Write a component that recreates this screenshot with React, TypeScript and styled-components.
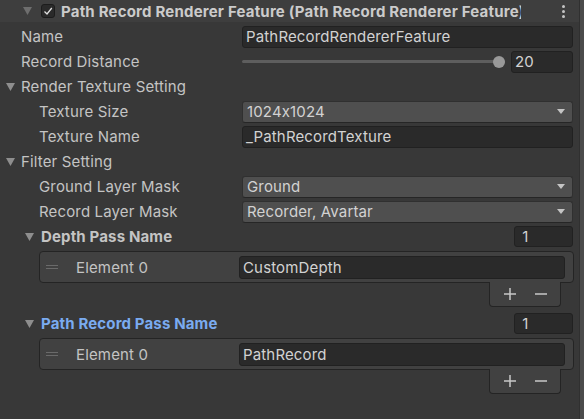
import React from 'react';
import styled, { createGlobalStyle } from 'styled-components';

const Global = createGlobalStyle`
  html, body { margin: 0; padding: 0; background: #383838; }
  body {
    font-family: Inter, "Noto Sans", sans-serif;
    font-feature-settings: "calt" 0;
    letter-spacing: 0.15px;
    -webkit-font-smoothing: antialiased;
  }
  * { box-sizing: border-box; }
`;

const Window = styled.div`
  width: 584px;
  height: 419px;
  display: flex;
  background: #383838;
  overflow: hidden;
`;

const Content = styled.div`
  flex: 1;
  min-width: 0;
  display: flex;
  flex-direction: column;
`;

const ScrollEdge = styled.div`
  width: 5px;
  background: #4b4b4b;
  border-left: 1px solid #303030;
`;

const Header = styled.div`
  height: 22px;
  background: #3e3e3e;
  display: flex;
  align-items: center;
  padding-left: 23px;
  padding-right: 14px;
`;

const Checkbox = styled.div`
  width: 14px;
  height: 14px;
  margin-left: 9px;
  border-radius: 3px;
  background: #2a2a2a;
  border: 1px solid #1c1c1c;
  display: flex;
  align-items: center;
  justify-content: center;
`;

const Title = styled.div`
  flex: 0 0 460px;
  margin-left: 6px;
  overflow: hidden;
  white-space: nowrap;
  font-size: 15px;
  font-weight: 700;
  letter-spacing: 0.2px;
  color: #cbcbcb;
`;

const Kebab = styled.div`
  margin-left: auto;
  display: flex;
  flex-direction: column;
  gap: 2px;
  span {
    width: 3px;
    height: 3px;
    border-radius: 50%;
    background: #c4c4c4;
  }
`;

const Body = styled.div`
  padding-top: 2px;
  display: flex;
  flex-direction: column;
`;

const Row = styled.div`
  height: 25px;
  display: grid;
  grid-template-columns: 242px 1fr;
  align-items: center;
  padding-right: 6px;
`;

const Label = styled.div<{ $indent: number; $bold?: boolean; $accent?: boolean }>`
  padding-left: ${p => p.$indent}px;
  display: flex;
  align-items: center;
  gap: ${p => (p.$bold ? 7 : 6)}px;
  font-size: 15px;
  font-weight: ${p => (p.$bold ? 700 : 400)};
  color: ${p => (p.$accent ? '#7aabf0' : '#c4c4c4')};
  white-space: nowrap;
`;

const TextField = styled.div<{ $h?: number }>`
  height: ${p => p.$h ?? 22}px;
  background: #2a2a2a;
  border: 1px solid #212121;
  border-radius: 3px;
  padding-left: 3px;
  display: flex;
  align-items: center;
  font-size: 15px;
  color: #d2d2d2;
  white-space: nowrap;
  overflow: hidden;
`;

const Dropdown = styled.div`
  height: 22px;
  background: #4f4f4f;
  border: 1px solid #303030;
  border-bottom-color: #262626;
  border-radius: 3px;
  padding: 0 7px 0 4px;
  display: flex;
  align-items: center;
  justify-content: space-between;
  font-size: 15px;
  color: #d2d2d2;
`;

const SliderWrap = styled.div`
  display: flex;
  align-items: center;
  gap: 6px;
`;

const Track = styled.div`
  flex: 1;
  height: 3px;
  background: #5e5e5e;
  border-radius: 2px;
  position: relative;
`;

const Thumb = styled.div`
  position: absolute;
  right: 0;
  top: 50%;
  width: 12px;
  height: 12px;
  margin-top: -6px;
  border-radius: 50%;
  background: #999999;
`;

const NumberField = styled(TextField)<{ $w: number }>`
  width: ${p => p.$w}px;
`;

const ListHeaderRow = styled.div`
  height: 25px;
  display: flex;
  align-items: center;
  justify-content: space-between;
  padding-right: 6px;
`;

const ListBlock = styled.div<{ $gapTop: number }>`
  display: flex;
  flex-direction: column;
  margin-top: ${p => p.$gapTop}px;
`;

const ElementBox = styled.div`
  margin: 2px 5px 0 39px;
  height: 32px;
  background: #414141;
  border: 1px solid #242424;
  border-radius: 4px;
  display: grid;
  grid-template-columns: 193px 1fr;
  align-items: center;
  padding: 0 8px 0 6px;
`;

const ElementLabel = styled.div`
  display: flex;
  align-items: center;
  gap: 18px;
  font-size: 15px;
  color: #c4c4c4;
`;

const Handle = styled.div`
  width: 12px;
  height: 4px;
  border-top: 1px solid #6a6a6a;
  border-bottom: 1px solid #6a6a6a;
`;

const Footer = styled.div`
  align-self: flex-end;
  margin: -1px 18px 0 0;
  width: 72px;
  height: 25px;
  background: #414141;
  border: 1px solid #242424;
  border-top: none;
  border-radius: 0 0 4px 4px;
  display: flex;
  align-items: center;
  padding-left: 14px;
  gap: 19px;
`;

const Arrow: React.FC<{ color?: string; w?: number; h?: number }> = ({ color = '#8e8e8e', w = 9, h = 8 }) => (
  <svg width={w} height={h} viewBox={`0 0 ${w} ${h}`} style={{ flex: 'none' }}>
    <polygon points={`0,0 ${w},0 ${w / 2},${h}`} fill={color} />
  </svg>
);

const DropArrow = () => (
  <svg width="8" height="5" viewBox="0 0 8 5">
    <polygon points="0,0 8,0 4,5" fill="#c4c4c4" />
  </svg>
);

const Plus = () => (
  <svg width="12" height="12" viewBox="0 0 12 12">
    <rect x="0" y="5.25" width="12" height="1.5" fill="#c8c8c8" />
    <rect x="5.25" y="0" width="1.5" height="12" fill="#c8c8c8" />
  </svg>
);

const Minus = () => (
  <svg width="12" height="12" viewBox="0 0 12 12">
    <rect x="0" y="5.25" width="12" height="1.5" fill="#c8c8c8" />
  </svg>
);

const ReorderList: React.FC<{ title: string; accent?: boolean; value: string; gapTop: number }> = ({ title, accent, value, gapTop }) => (
  <ListBlock $gapTop={gapTop}>
    <ListHeaderRow>
      <Label $indent={25} $bold $accent={accent}>
        <Arrow />
        {title}
      </Label>
      <NumberField $w={59} $h={21}>&nbsp;1</NumberField>
    </ListHeaderRow>
    <ElementBox>
      <ElementLabel>
        <Handle />
        Element 0
      </ElementLabel>
      <TextField $h={23}>{value}</TextField>
    </ElementBox>
    <Footer>
      <Plus />
      <Minus />
    </Footer>
  </ListBlock>
);

export default function App() {
  return (
    <>
      <Global />
      <Window>
        <Content>
          <Header>
            <Arrow color="#6e6e6e" />
            <Checkbox>
              <svg width="10" height="10" viewBox="0 0 10 10">
                <path d="M1.5 5.5 L4 8 L8.8 2" stroke="#e0e0e0" strokeWidth="1.3" fill="none" />
              </svg>
            </Checkbox>
            <Title>Path Record Renderer Feature (Path Record Renderer Feature)</Title>
            <Kebab>
              <span />
              <span />
              <span />
            </Kebab>
          </Header>
          <Body>
            <Row>
              <Label $indent={21}>Name</Label>
              <TextField>PathRecordRendererFeature</TextField>
            </Row>
            <Row>
              <Label $indent={21}>Record Distance</Label>
              <SliderWrap>
                <Track>
                  <Thumb />
                </Track>
                <NumberField $w={62}>20</NumberField>
              </SliderWrap>
            </Row>
            <Row>
              <Label $indent={6}>
                <Arrow />
                Render Texture Setting
              </Label>
            </Row>
            <Row>
              <Label $indent={39}>Texture Size</Label>
              <Dropdown>
                1024x1024
                <DropArrow />
              </Dropdown>
            </Row>
            <Row>
              <Label $indent={39}>Texture Name</Label>
              <TextField>_PathRecordTexture</TextField>
            </Row>
            <Row>
              <Label $indent={6}>
                <Arrow />
                Filter Setting
              </Label>
            </Row>
            <Row>
              <Label $indent={39}>Ground Layer Mask</Label>
              <Dropdown>
                Ground
                <DropArrow />
              </Dropdown>
            </Row>
            <Row>
              <Label $indent={39}>Record Layer Mask</Label>
              <Dropdown>
                Recorder, Avartar
                <DropArrow />
              </Dropdown>
            </Row>
            <ReorderList title="Depth Pass Name" value="CustomDepth" gapTop={0} />
            <ReorderList title="Path Record Pass Name" accent value="PathRecord" gapTop={4} />
          </Body>
        </Content>
        <ScrollEdge />
      </Window>
    </>
  );
}
